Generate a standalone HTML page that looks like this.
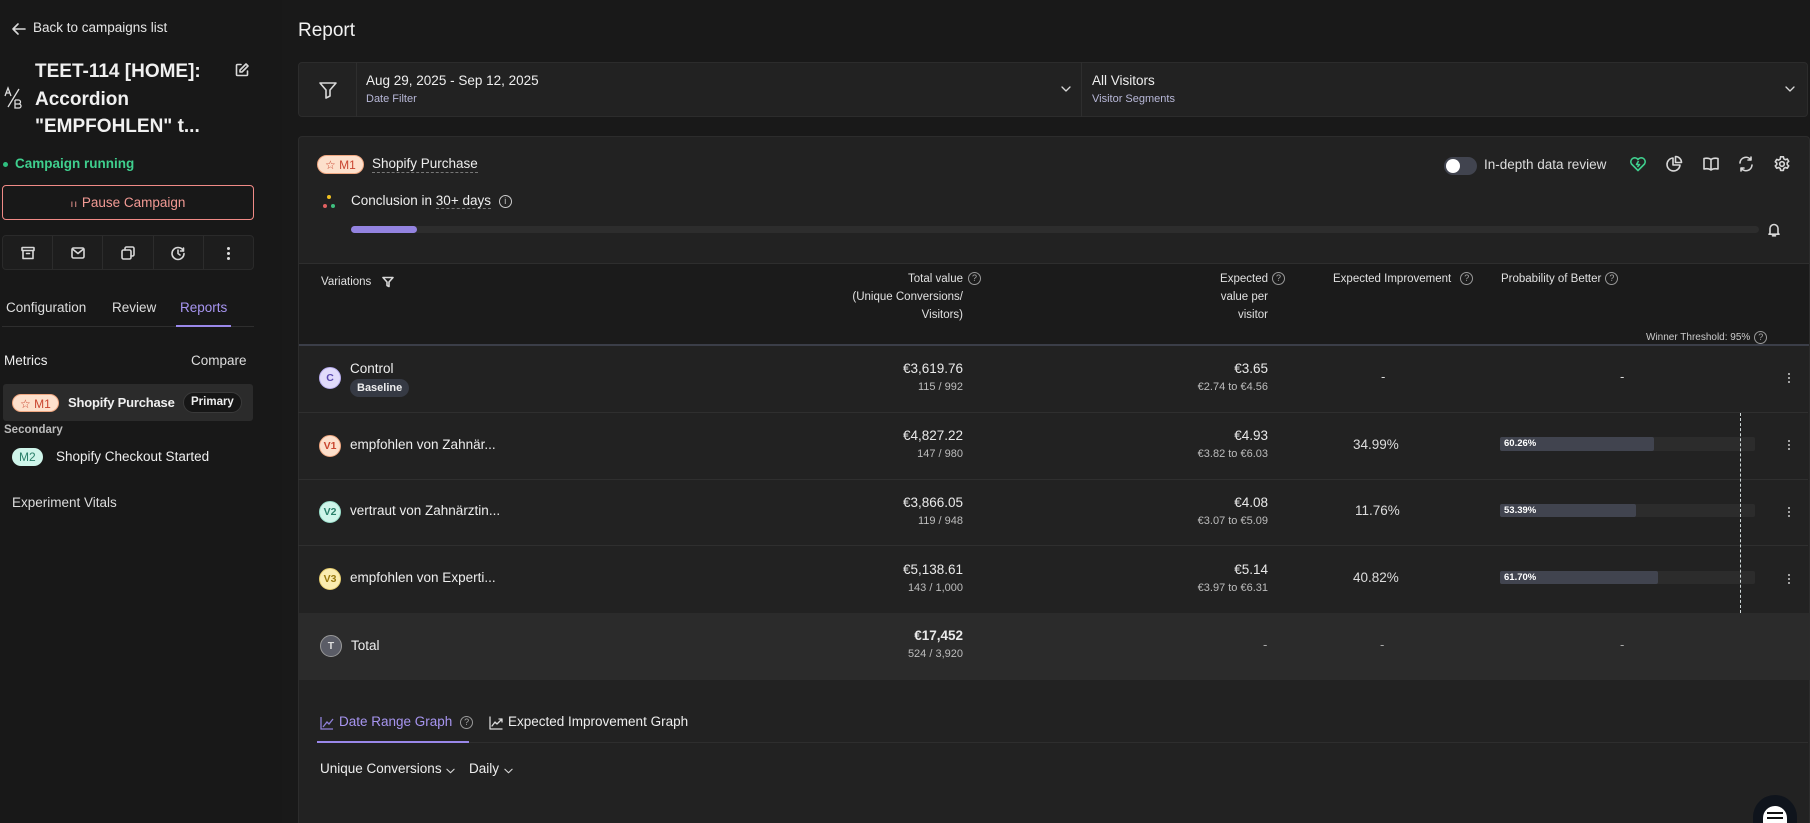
<!DOCTYPE html>
<html style="width:1810px;height:823px;overflow:hidden"><head><meta charset="utf-8">
<style>
*{box-sizing:border-box;margin:0;padding:0}
body{width:1810px;height:823px;overflow:hidden;background:#191919;font-family:"Liberation Sans",sans-serif;color:#e8e8e8;position:relative;font-size:13px}
.a{position:absolute}
svg{display:block}
.ic{stroke:#d8d8d8;fill:none;stroke-width:1.6;stroke-linecap:round;stroke-linejoin:round}
.badge{position:absolute;border-radius:10px;font-size:12px;height:18px;line-height:18px;padding:0 7px}
.circ{position:absolute;width:22px;height:22px;border-radius:50%;font-size:10.5px;line-height:20px;text-align:center;font-weight:bold}
.num{position:absolute;text-align:right;font-size:13.5px;color:#eaeaea}
.sub{font-size:11px;color:#bdbdbd;margin-top:5px}
.row{position:absolute;left:298px;width:1510px;border-bottom:1px solid #2f2f2f}
.hd{position:absolute;font-size:11.5px;color:#e0e0e0;line-height:18px}
.q{display:inline-block;width:13px;height:13px;border:1px solid #999;border-radius:50%;font-size:9px;line-height:11px;text-align:center;color:#aaa;vertical-align:middle;margin-left:4px}
.bar{position:absolute;left:1500px;width:255px;height:14px;background:#2c2c2c;border-radius:2px}
.bar div{height:14px;background:#41444f;border-radius:2px;font-size:9.5px;font-weight:bold;line-height:14px;padding-left:4px;color:#fff}
.keb{position:absolute;left:1788px;width:3px}
.keb i{display:block;width:2px;height:2px;background:#ccc;margin-bottom:2px;border-radius:1px}
</style></head><body>

<!-- sidebar -->
<div class="a" style="left:0;top:0;width:282px;height:823px;background:#181818"></div>
<svg class="a ic" style="left:11px;top:21px" width="16" height="16" viewBox="0 0 16 16"><path d="M14 8H2M7 3L2 8l5 5"/></svg>
<div class="a" style="left:33px;top:20px;font-size:13.5px;color:#e6e6e6">Back to campaigns list</div>
<div class="a" style="left:35px;top:58px;font-size:19px;font-weight:bold;line-height:27.5px;color:#f0f0f0">TEET-114 [HOME]:<br>Accordion<br>"EMPFOHLEN" t...</div>
<svg class="a ic" style="left:234px;top:62px" width="16" height="16" viewBox="0 0 16 16"><path d="M7 2.5H3.5a1 1 0 0 0-1 1v9a1 1 0 0 0 1 1h9a1 1 0 0 0 1-1V9"/><path d="M12 2l2 2-6 6H6V8z"/></svg>
<svg class="a" style="left:4px;top:86px;stroke:#ddd;fill:none;stroke-width:1.3" width="20" height="24" viewBox="0 0 20 24"><path d="M1 10l3-8 3 8M2 7h4M15 3L4 21M11 14v8h4a2 2 0 0 0 0-4h-4M11 14h3.5a2 2 0 0 1 0 4"/></svg>
<div class="a" style="left:3px;top:162px;width:5px;height:5px;border-radius:50%;background:#2fbf7f"></div>
<div class="a" style="left:15px;top:156px;font-size:13.5px;font-weight:bold;color:#3fcf8e">Campaign running</div>
<div class="a" style="left:2px;top:185px;width:252px;height:35px;border:1px solid #f08a86;border-radius:4px;text-align:center;line-height:33px;color:#f29a94;font-size:13.5px"><span style="font-size:10px;letter-spacing:1px">ıı</span> Pause Campaign</div>
<div class="a" style="left:2px;top:235px;width:252px;height:35px;border:1px solid #2a2a2a;border-radius:4px;background:#1d1d1d;display:flex">
 <div style="flex:1;border-right:1px solid #2c2c2c"><svg class="ic" style="margin:9px auto" width="16" height="16" viewBox="0 0 16 16"><rect x="2" y="2.5" width="12" height="3" rx=".5"/><path d="M3 5.5v8h10v-8M6.5 8.5h3"/></svg></div>
 <div style="flex:1;border-right:1px solid #2c2c2c"><svg class="ic" style="margin:9px auto" width="16" height="16" viewBox="0 0 16 16"><rect x="2" y="3" width="12" height="10" rx="1.5"/><path d="M2.5 4l5.5 4.5L13.5 4"/></svg></div>
 <div style="flex:1;border-right:1px solid #2c2c2c"><svg class="ic" style="margin:9px auto" width="16" height="16" viewBox="0 0 16 16"><rect x="2" y="5" width="9" height="9" rx="1.5"/><path d="M5 5V3.5A1.5 1.5 0 0 1 6.5 2h6A1.5 1.5 0 0 1 14 3.5v6a1.5 1.5 0 0 1-1.5 1.5H11"/></svg></div>
 <div style="flex:1;border-right:1px solid #2c2c2c"><svg class="ic" style="margin:9px auto" width="16" height="16" viewBox="0 0 16 16"><path d="M14 8.5A6 6 0 1 1 8 2.5a6 6 0 0 1 5.5 3.5M8 5v3.5l2 1.5M13.5 3v3h-3"/></svg></div>
 <div style="flex:1"><div style="width:3px;margin:11px auto"><i style="display:block;width:3px;height:3px;background:#ddd;border-radius:2px;margin-bottom:2px"></i><i style="display:block;width:3px;height:3px;background:#ddd;border-radius:2px;margin-bottom:2px"></i><i style="display:block;width:3px;height:3px;background:#ddd;border-radius:2px"></i></div></div>
</div>
<div class="a" style="left:6px;top:300px;font-size:13.5px;color:#ddd">Configuration</div>
<div class="a" style="left:112px;top:300px;font-size:13.5px;color:#ddd">Review</div>
<div class="a" style="left:180px;top:300px;font-size:13.5px;color:#a795f0">Reports</div>
<div class="a" style="left:2px;top:326px;width:252px;height:1px;background:#2e2e2e"></div>
<div class="a" style="left:176px;top:325px;width:55px;height:2px;background:#9a88ea"></div>
<div class="a" style="left:4px;top:353px;font-size:13.5px;color:#eee">Metrics</div>
<div class="a" style="left:191px;top:353px;font-size:13.5px;color:#ddd">Compare</div>
<div class="a" style="left:3px;top:384px;width:250px;height:37px;background:#2b2b2b;border-radius:3px"></div>
<div class="badge" style="left:12px;top:394px;background:#fde0cc;color:#c9452f;border:1px solid #f0a882">☆ M1</div>
<div class="a" style="left:68px;top:395px;font-size:13px;font-weight:bold;color:#f0f0f0;letter-spacing:-0.2px">Shopify Purchase</div>
<div class="a" style="left:183px;top:392px;padding:0 7px;height:21px;line-height:19px;border:1px solid #3a3a3a;border-radius:11px;background:#161616;font-size:11.5px;font-weight:bold;color:#eee">Primary</div>
<div class="a" style="left:4px;top:424px;font-size:11.5px;color:#bbb;font-weight:bold">Secondary</div>
<div class="badge" style="left:12px;top:448px;background:#cff5ea;color:#2a7f69">M2</div>
<div class="a" style="left:56px;top:449px;font-size:13.5px;color:#eee">Shopify Checkout Started</div>
<div class="a" style="left:12px;top:495px;font-size:13.5px;color:#ddd">Experiment Vitals</div>

<!-- main -->
<div class="a" style="left:298px;top:20px;font-size:19px;color:#f2f2f2">Report</div>
<div class="a" style="left:298px;top:62px;width:1510px;height:55px;background:#222;border:1px solid #2c2c2c;border-radius:4px"></div>
<div class="a" style="left:356px;top:62px;width:1px;height:55px;background:#2e2e2e"></div>
<div class="a" style="left:1081px;top:62px;width:1px;height:55px;background:#2e2e2e"></div>
<svg class="a ic" style="left:318px;top:80px" width="20" height="20" viewBox="0 0 20 20"><path d="M2 3h16l-6 7v6l-4 2v-8z"/></svg>
<div class="a" style="left:366px;top:73px;font-size:13.5px;color:#eee">Aug 29, 2025 - Sep 12, 2025</div>
<div class="a" style="left:366px;top:93px;font-size:11px;color:#b8b8d8">Date Filter</div>
<svg class="a ic" style="left:1061px;top:86px;stroke-width:1.3" width="10" height="6" viewBox="0 0 10 6"><path d="M1 1l4 4 4-4"/></svg>
<div class="a" style="left:1092px;top:73px;font-size:13.5px;color:#eee">All Visitors</div>
<div class="a" style="left:1092px;top:93px;font-size:11px;color:#b8b8d8">Visitor Segments</div>
<svg class="a ic" style="left:1785px;top:86px;stroke-width:1.3" width="10" height="6" viewBox="0 0 10 6"><path d="M1 1l4 4 4-4"/></svg>

<div class="a" style="left:298px;top:136px;width:1512px;height:687px;background:#222;border:1px solid #2c2c2c;border-bottom:none;border-radius:4px 4px 0 0"></div>
<div class="badge" style="left:317px;top:155px;background:#fde0cc;color:#c9452f;border:1px solid #f0a882;height:19px">☆ M1</div>
<div class="a" style="left:372px;top:155px;font-size:13.5px;color:#eee;border-bottom:1px dashed #777;line-height:17px">Shopify Purchase</div>
<div class="a" style="left:1444px;top:157px;width:33px;height:18px;background:#41444f;border-radius:9px"><div style="width:14px;height:14px;background:#fff;border-radius:50%;margin:2px"></div></div>
<div class="a" style="left:1484px;top:157px;font-size:13.5px;color:#ddd">In-depth data review</div>
<svg class="a" style="left:1629px;top:155px;stroke:#3fcf8e;fill:none;stroke-width:1.6;stroke-linejoin:round" width="18" height="18" viewBox="0 0 18 18"><path d="M9 15.5L2.5 9a3.8 3.8 0 0 1 6.5-4.5A3.8 3.8 0 0 1 15.5 9z"/><path d="M9.5 6L7.5 9.5h3L8.5 12"/></svg>
<svg class="a ic" style="left:1665px;top:155px" width="18" height="18" viewBox="0 0 18 18"><path d="M8 3a6.5 6.5 0 1 0 7 7H8z"/><path d="M10.5 1.5v6h6a6 6 0 0 0-6-6z"/></svg>
<svg class="a ic" style="left:1702px;top:155px" width="18" height="18" viewBox="0 0 18 18"><path d="M9 4.5C7 3 4.5 3 2 3.5V14c2.5-.5 5-.5 7 1 2-1.5 4.5-1.5 7-1V3.5C13.5 3 11 3 9 4.5zM9 4.5V15"/></svg>
<svg class="a ic" style="left:1737px;top:155px" width="18" height="18" viewBox="0 0 18 18"><path d="M3 8a6 6 0 0 1 11-3M15 10a6 6 0 0 1-11 3M14 2v3h-3M4 16v-3h3"/></svg>
<svg class="a ic" style="left:1773px;top:155px" width="18" height="18" viewBox="0 0 18 18"><circle cx="9" cy="9" r="2.3"/><path d="M7.6 1.8h2.8l.4 2 1.6.9 1.9-.7 1.4 2.4-1.5 1.3v1.8l1.5 1.3-1.4 2.4-1.9-.7-1.6.9-.4 2H7.6l-.4-2-1.6-.9-1.9.7-1.4-2.4 1.5-1.3V8.1L2.3 6.8l1.4-2.4 1.9.7 1.6-.9z"/></svg>

<div class="a" style="left:327px;top:195px;width:4px;height:4px;border-radius:50%;background:#f0c020"></div>
<div class="a" style="left:323px;top:204px;width:4px;height:4px;border-radius:50%;background:#e06060"></div>
<div class="a" style="left:331px;top:204px;width:4px;height:4px;border-radius:50%;background:#3fbf7f"></div>
<div class="a" style="left:351px;top:193px;font-size:13.5px;color:#eee">Conclusion in <span style="border-bottom:1px dashed #777">30+ days</span> <span class="q" style="border-color:#ccc;color:#ccc">i</span></div>
<div class="a" style="left:351px;top:226px;width:1408px;height:7px;background:#2d2d2d;border-radius:4px"><div style="width:66px;height:7px;background:#9383e0;border-radius:4px"></div></div>
<svg class="a ic" style="left:1767px;top:222px" width="14" height="15" viewBox="0 0 14 15"><path d="M3 11V6.5a4 4 0 0 1 8 0V11l1 1.2H2zM5.5 13.8h3"/></svg>

<div class="a" style="left:299px;top:263px;width:1510px;height:82px;background:#1b1b1b;border-top:1px solid #2e2e2e"></div>
<div class="a" style="left:299px;top:344px;width:1510px;height:2px;background:#3b3e48"></div>
<div class="hd" style="left:321px;top:273px">Variations <svg class="ic" style="display:inline;vertical-align:middle;margin-left:8px" width="12" height="12" viewBox="0 0 12 12"><path d="M1 1.5h10l-4 4.5v4.5l-2-1V6z"/></svg></div>
<div class="hd" style="right:847px;top:270px;text-align:right;line-height:18px">Total value<br>(Unique Conversions/<br>Visitors)</div>
<span class="q a" style="left:968px;top:272px;margin:0">?</span>
<div class="hd" style="right:542px;top:270px;text-align:right;line-height:18px">Expected<br>value per<br>visitor</div>
<span class="q a" style="left:1272px;top:272px;margin:0">?</span>
<div class="hd" style="left:1333px;top:270px">Expected Improvement<span class="q" style="margin-left:9px">?</span></div>
<div class="hd" style="left:1501px;top:270px">Probability of Better<span class="q">?</span></div>
<div class="a" style="left:1646px;top:331px;font-size:10px;color:#ccc">Winner Threshold: 95%<span class="q">?</span></div>

<!-- rows -->
<div class="row" style="top:346px;height:67px"></div>
<div class="circ" style="left:319px;top:367px;background:#e1dbfb;color:#5b4ab0;border:1px solid #b9aef0">C</div>
<div class="a" style="left:350px;top:361px;font-size:13.5px;color:#eee">Control</div>
<div class="a" style="left:350px;top:379px;background:#363a44;border-radius:9px;padding:0 7px;height:18px;line-height:18px;font-size:11px;font-weight:bold;color:#eee">Baseline</div>
<div class="num" style="right:847px;top:361px">€3,619.76<div class="sub">115 / 992</div></div>
<div class="num" style="right:542px;top:361px">€3.65<div class="sub">€2.74 to €4.56</div></div>
<div class="a" style="left:1381px;top:369px;color:#ddd">-</div>
<div class="a" style="left:1620px;top:369px;color:#ddd">-</div>
<div class="keb" style="top:373px"><i></i><i></i><i></i></div>

<div class="row" style="top:413px;height:67px"></div>
<div class="circ" style="left:319px;top:435px;background:#fde0cc;color:#c9452f;border:1px solid #f0a882">V1</div>
<div class="a" style="left:350px;top:437px;font-size:13.5px;color:#eee">empfohlen von Zahnär...</div>
<div class="num" style="right:847px;top:428px">€4,827.22<div class="sub">147 / 980</div></div>
<div class="num" style="right:542px;top:428px">€4.93<div class="sub">€3.82 to €6.03</div></div>
<div class="a" style="left:1353px;top:437px;font-size:13.5px;color:#ddd">34.99%</div>
<div class="bar" style="top:437px"><div style="width:154px">60.26%</div></div>
<div class="keb" style="top:440px"><i></i><i></i><i></i></div>

<div class="row" style="top:480px;height:66px"></div>
<div class="circ" style="left:319px;top:501px;background:#cff5ea;color:#2a7f69;border:1px solid #9ae0cc">V2</div>
<div class="a" style="left:350px;top:503px;font-size:13.5px;color:#eee">vertraut von Zahnärztin...</div>
<div class="num" style="right:847px;top:495px">€3,866.05<div class="sub">119 / 948</div></div>
<div class="num" style="right:542px;top:495px">€4.08<div class="sub">€3.07 to €5.09</div></div>
<div class="a" style="left:1355px;top:503px;font-size:13.5px;color:#ddd">11.76%</div>
<div class="bar" style="top:504px;height:13px"><div style="width:136px;height:13px;line-height:13px">53.39%</div></div>
<div class="keb" style="top:507px"><i></i><i></i><i></i></div>

<div class="row" style="top:546px;height:67px;border-bottom:none"></div>
<div class="circ" style="left:319px;top:568px;background:#fbedb0;color:#9a7a10;border:1px solid #e8cf70">V3</div>
<div class="a" style="left:350px;top:570px;font-size:13.5px;color:#eee">empfohlen von Experti...</div>
<div class="num" style="right:847px;top:562px">€5,138.61<div class="sub">143 / 1,000</div></div>
<div class="num" style="right:542px;top:562px">€5.14<div class="sub">€3.97 to €6.31</div></div>
<div class="a" style="left:1353px;top:570px;font-size:13.5px;color:#ddd">40.82%</div>
<div class="bar" style="top:571px;height:13px"><div style="width:158px;height:13px;line-height:13px">61.70%</div></div>
<div class="keb" style="top:574px"><i></i><i></i><i></i></div>
<div class="a" style="left:1740px;top:413px;height:200px;border-left:1px dashed #cfd8d8"></div>

<div class="a" style="left:299px;top:613px;width:1510px;height:67px;background:#2b2b2b"></div>
<div class="circ" style="left:320px;top:635px;background:#5a5c66;color:#ddd;border:1px solid #999">T</div>
<div class="a" style="left:351px;top:638px;font-size:13.5px;color:#eee">Total</div>
<div class="num" style="right:847px;top:628px;font-weight:bold">€17,452<div class="sub" style="font-weight:normal">524 / 3,920</div></div>
<div class="a" style="left:1263px;top:637px;color:#aaa">-</div>
<div class="a" style="left:1380px;top:637px;color:#aaa">-</div>
<div class="a" style="left:1620px;top:637px;color:#aaa">-</div>

<!-- graph tabs -->
<svg class="a" style="left:320px;top:716px;stroke:#8f80d8;fill:none;stroke-width:1.3" width="14" height="14" viewBox="0 0 14 14"><path d="M1 1v12h12M3 11l4-5 2 2 4-5"/></svg>
<div class="a" style="left:339px;top:714px;font-size:13.5px;color:#a795f0">Date Range Graph <span class="q">?</span></div>
<svg class="a ic" style="left:489px;top:716px;stroke-width:1.3" width="14" height="14" viewBox="0 0 14 14"><path d="M1 1v12h12M3 10l3-4 2 2 5-5M10 3h3v3"/></svg>
<div class="a" style="left:508px;top:714px;font-size:13.5px;color:#eee">Expected Improvement Graph</div>
<div class="a" style="left:317px;top:742px;width:1491px;height:1px;background:#2e2e2e"></div>
<div class="a" style="left:317px;top:741px;width:152px;height:2px;background:#9a88ea"></div>
<div class="a" style="left:320px;top:761px;font-size:13.5px;color:#eee">Unique Conversions</div>
<svg class="a ic" style="left:446px;top:768px;stroke-width:1.2" width="9" height="6" viewBox="0 0 10 6"><path d="M1 1l4 4 4-4"/></svg>
<div class="a" style="left:469px;top:761px;font-size:13.5px;color:#eee">Daily</div>
<svg class="a ic" style="left:504px;top:768px;stroke-width:1.2" width="9" height="6" viewBox="0 0 10 6"><path d="M1 1l4 4 4-4"/></svg>

<div class="a" style="left:1753px;top:795px;width:44px;height:28px;border-radius:22px 22px 0 0;background:#0f141c"></div>
<div class="a" style="left:1763px;top:806px;width:24px;height:17px;border-radius:12px 12px 0 0;background:#fff"></div>
<div class="a" style="left:1767px;top:812px;width:16px;height:2px;background:#111"></div>
<div class="a" style="left:1767px;top:817px;width:16px;height:2px;background:#111"></div>
</body></html>
